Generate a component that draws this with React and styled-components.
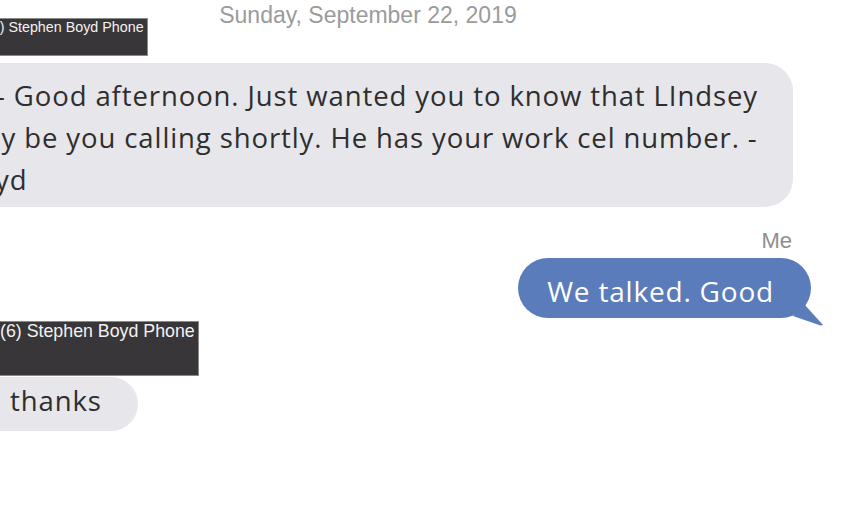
import React from 'react';
import styled, { createGlobalStyle } from 'styled-components';

const GlobalStyle = createGlobalStyle`
  html, body {
    margin: 0;
    padding: 0;
    background: #fff;
    overflow: hidden;
  }
`;

const Thread = styled.div`
  width: 936px;
  margin-left: -100px;
  display: flex;
  flex-direction: column;
  font-family: 'Open Sans', 'Noto Sans', sans-serif;
`;

const DateRow = styled.div`
  height: 26px;
  padding-top: 2px;
  text-align: center;
  font-family: 'Liberation Sans', Arial, sans-serif;
  font-size: 23px;
  line-height: 26px;
  color: #9b9b9b;
`;

const SenderTag = styled.div`
  align-self: flex-start;
  box-sizing: border-box;
  margin-left: ${(p) => p.offset}px;
  margin-top: ${(p) => p.top}px;
  height: ${(p) => p.height}px;
  padding: 0 3px 0 2px;
  background: #383638;
  border: 1px solid #8a8a8a;
  color: #f2f2f2;
  font-family: 'Liberation Sans', Arial, sans-serif;
  font-size: ${(p) => p.size}px;
  line-height: ${(p) => p.size + 2}px;
  white-space: nowrap;
`;

const Bubble = styled.div`
  align-self: flex-start;
  margin-left: ${(p) => p.offset}px;
  margin-top: ${(p) => p.top}px;
  padding: ${(p) => p.pad};
  background: #e6e6eb;
  color: #2e2e2e;
  border-radius: 28px;
  font-size: 27.5px;
  letter-spacing: 0.9px;
  line-height: 42px;
  white-space: nowrap;
`;

const MeLabel = styled.div`
  align-self: flex-end;
  margin-right: 44px;
  margin-top: 22px;
  font-family: 'Liberation Sans', Arial, sans-serif;
  font-size: 22px;
  line-height: 24px;
  color: #8e8e8e;
`;

const OutgoingWrap = styled.div`
  align-self: flex-end;
  margin-right: 25px;
  margin-top: 5px;
  position: relative;
`;

const OutgoingBubble = styled.div`
  padding: 12px 37px 6px 29px;
  background: #5a7cba;
  color: #fff;
  border-radius: 30px;
  font-size: 28px;
  letter-spacing: 0.8px;
  line-height: 42px;
  white-space: nowrap;
`;

const Tail = styled.svg`
  position: absolute;
  right: -12px;
  bottom: -8px;
  width: 32px;
  height: 26px;
`;

export default function App() {
  return (
    <>
      <GlobalStyle />
      <Thread>
        <DateRow>Sunday, September 22, 2019</DateRow>

        <SenderTag offset={84} top={-10} height={38} size={14.3}>
          (6) Stephen Boyd Phone
        </SenderTag>
        <Bubble offset={37} top={7} pad="12px 35px 6px 22px">
          Hi - Good afternoon. Just wanted you to know that LIndsey
          <br />
          may be you calling shortly. He has your work cel number. -
          <br />
          Boyd
        </Bubble>

        <MeLabel>Me</MeLabel>
        <OutgoingWrap>
          <OutgoingBubble>We talked. Good</OutgoingBubble>
          <Tail viewBox="0 0 32 26">
            <polygon points="2,16 13,4 32,25 29.5,25.5" fill="#5a7cba" />
          </Tail>
        </OutgoingWrap>

        <SenderTag offset={97} top={3} height={55} size={17.8}>
          (6) Stephen Boyd Phone
        </SenderTag>
        <Bubble offset={56} top={1} pad="3px 36px 9px 54px">
          thanks
        </Bubble>
      </Thread>
    </>
  );
}
